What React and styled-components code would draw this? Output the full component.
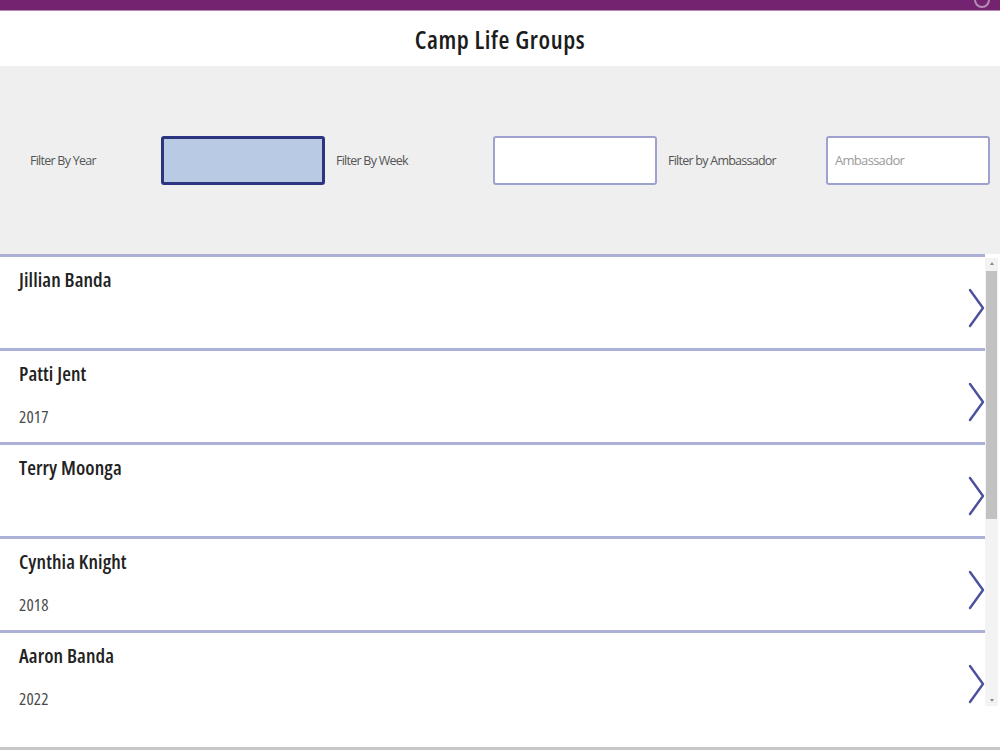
import React from 'react';
import styled, { createGlobalStyle } from 'styled-components';

const Global = createGlobalStyle`
  html, body { margin: 0; padding: 0; background: #ffffff; }
  body { font-family: 'Open Sans', 'Noto Sans', sans-serif; }
`

const Screen = styled.div`
  width: 1000px;
  height: 750px;
  display: flex;
  flex-direction: column;
  overflow: hidden;
  background: #ffffff;
  border-bottom: 3px solid #c8c8c8;
  box-sizing: border-box;
`

const TopBar = styled.div`
  height: 10px;
  background: #742370;
  border-bottom: 1px solid #b68ab3;
  position: relative;
  flex-shrink: 0;
`

const Gear = styled.div`
  position: absolute;
  right: 10px;
  top: -8px;
  width: 12px;
  height: 12px;
  border: 2px solid #b58cb3;
  border-radius: 50%;
`

const Header = styled.div`
  height: 55px;
  display: flex;
  align-items: center;
  justify-content: center;
  flex-shrink: 0;
`

const Title = styled.h1`
  margin: 1px 0 0;
  font-size: 25px;
  font-weight: 600;
  font-stretch: 85%;
  letter-spacing: 0.6px;
  color: #1c1c1c;
`

const FilterPanel = styled.div`
  height: 188px;
  background: #efefef;
  display: grid;
  grid-template-columns: 131px 164px 168px 164px 169px 164px;
  align-items: center;
  padding-left: 30px;
  flex-shrink: 0;
`

const Label = styled.span`
  font-size: 12.5px;
  letter-spacing: -0.75px;
  color: #555;
  padding-left: ${p => p.$indent ? '11px' : '0'};
`

const Field = styled.div`
  height: 49px;
  box-sizing: border-box;
  border-radius: 3px;
  border: ${p => p.$active ? '3px solid #2e3580' : '2px solid #9fa2cf'};
  background: ${p => p.$active ? '#b9cbe4' : '#ffffff'};
  display: flex;
  align-items: center;
  padding-left: 7px;
  font-size: 13px;
  letter-spacing: -0.7px;
  color: #9a9a9a;
`

const ListArea = styled.div`
  display: flex;
  height: 472px;
  flex-shrink: 0;
`

const Rows = styled.div`
  flex: 1;
  display: flex;
  flex-direction: column;
`

const Row = styled.div`
  height: 94px;
  box-sizing: border-box;
  border-top: 3px solid #adb0d6;
  display: flex;
  align-items: center;
  padding-left: 19px;
`

const Info = styled.div`
  flex: 1;
  align-self: stretch;
  display: flex;
  flex-direction: column;
  padding-top: 10px;
`

const Name = styled.div`
  font-size: 20px;
  font-weight: 600;
  font-stretch: 85%;
  letter-spacing: 0.1px;
  color: #222;
  line-height: 26px;
`

const Year = styled.div`
  margin-top: 19px;
  font-size: 17px;
  font-stretch: 85%;
  letter-spacing: 0.2px;
  color: #4a4a4a;
  line-height: 22px;
`

const Chevron = styled.svg`
  width: 18px;
  height: 40px;
  margin-top: 10px;
`

const Scrollbar = styled.div`
  width: 13px;
  margin: 4px 2px 20px 0;
  background: #f3f3f3;
  display: flex;
  flex-direction: column;
  align-items: center;
`

const Arrow = styled.div`
  width: 0;
  height: 0;
  border-left: 2px solid transparent;
  border-right: 2px solid transparent;
  border-${p => p.$down ? 'top' : 'bottom'}: 3px solid #8a8a8a;
  margin: 4px 0;
`

const Thumb = styled.div`
  width: 11px;
  height: 248px;
  background: #c2c2c2;
  margin-top: 2px;
`

const Spacer = styled.div`
  flex: 1;
`

const people = [
  { name: 'Jillian Banda', year: '' },
  { name: 'Patti Jent', year: '2017' },
  { name: 'Terry Moonga', year: '' },
  { name: 'Cynthia Knight', year: '2018' },
  { name: 'Aaron Banda', year: '2022' },
]

const App = () => {
  return (
    <Screen>
      <Global />
      <TopBar><Gear /></TopBar>
      <Header>
        <Title>Camp Life Groups</Title>
      </Header>
      <FilterPanel>
        <Label>Filter By Year</Label>
        <Field $active />
        <Label $indent>Filter By Week</Label>
        <Field />
        <Label $indent>Filter by Ambassador</Label>
        <Field>Ambassador</Field>
      </FilterPanel>
      <ListArea>
        <Rows>
          {people.map(p => (
            <Row key={p.name}>
              <Info>
                <Name>{p.name}</Name>
                {p.year && <Year>{p.year}</Year>}
              </Info>
              <Chevron viewBox="0 0 18 40">
                <polyline points="3,2 16,20 3,38" fill="none" stroke="#4b519c" strokeWidth="2.4" strokeLinecap="round" strokeLinejoin="round" />
              </Chevron>
            </Row>
          ))}
        </Rows>
        <Scrollbar>
          <Arrow />
          <Thumb />
          <Spacer />
          <Arrow $down />
        </Scrollbar>
      </ListArea>
    </Screen>
  )
}

export default App
